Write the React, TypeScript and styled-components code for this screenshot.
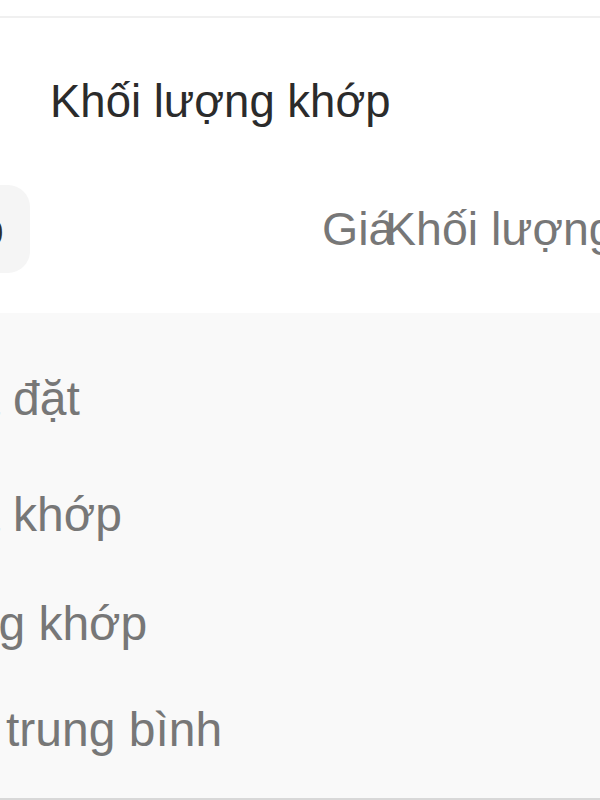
import React from "react";
import styled, { createGlobalStyle } from "styled-components";

const Global = createGlobalStyle`
  html, body { margin: 0; padding: 0; background: #ffffff; }
  body { font-family: "Liberation Sans", Arial, sans-serif; }
  #root { width: 600px; height: 800px; overflow: hidden; }
`;

const Page = styled.div`
  width: 600px;
  height: 800px;
  overflow: hidden;
  display: flex;
  flex-direction: column;
  background: #ffffff;
`;

const TopStrip = styled.div`
  height: 16px;
  flex-shrink: 0;
  border-bottom: 2px solid #f0f0f0;
`;

const TitleRow = styled.div`
  height: 167px;
  flex-shrink: 0;
  display: flex;
  align-items: center;
  padding-left: 50px;
`;

const Title = styled.h1`
  margin: 0;
  font-weight: 400;
  font-size: 45.5px;
  line-height: 1;
  color: #2b2b2b;
  white-space: nowrap;
`;

const HeaderRow = styled.div`
  height: 128px;
  flex-shrink: 0;
  display: flex;
  align-items: flex-start;
`;

const Pill = styled.div`
  width: 30px;
  height: 88px;
  flex-shrink: 0;
  border-radius: 0 22px 22px 0;
  background: #f5f5f5;
  display: flex;
  align-items: center;
  justify-content: flex-end;
  padding-right: 26px;
  box-sizing: border-box;
  overflow: hidden;
  font-size: 46.5px;
  color: #2e2e2e;
  white-space: nowrap;
`;

const HeadCell = styled.div<{ $w?: number; $ml?: number }>`
  height: 88px;
  display: flex;
  align-items: center;
  flex-shrink: 0;
  width: ${(p) => (p.$w ? `${p.$w}px` : "auto")};
  margin-left: ${(p) => p.$ml ?? 0}px;
  font-size: 46.5px;
  color: #777777;
  white-space: nowrap;
`;

const Table = styled.div`
  flex: 1;
  background: #f9f9f9;
  border-bottom: 2px solid #d8d8d8;
  padding-top: 27px;
  display: flex;
  flex-direction: column;
  overflow: hidden;
`;

const Row = styled.div<{ $h: number }>`
  height: ${(p) => p.$h}px;
  flex-shrink: 0;
  display: flex;
  align-items: center;
  overflow: hidden;
`;

const Label = styled.div<{ $x: number }>`
  margin-left: ${(p) => p.$x}px;
  font-size: 48px;
  color: #777777;
  white-space: nowrap;
`;

const rows = [
  { text: "Giá đặt", x: -75, h: 116 },
  { text: "Giá khớp", x: -75, h: 117 },
  { text: "Khối lượng khớp", x: -212, h: 101 },
  { text: "Giá trung bình", x: -82, h: 111 },
];

export default function App() {
  return (
    <Page>
      <Global />
      <TopStrip />
      <TitleRow>
        <Title>Khối lượng khớp</Title>
      </TitleRow>
      <HeaderRow>
        <Pill>Lệnh khớp</Pill>
        <HeadCell $ml={292} $w={63}>
          Giá
        </HeadCell>
        <HeadCell>Khối lượng khớp</HeadCell>
      </HeaderRow>
      <Table>
        {rows.map((r) => (
          <Row key={r.text} $h={r.h}>
            <Label $x={r.x}>{r.text}</Label>
          </Row>
        ))}
      </Table>
    </Page>
  );
}
